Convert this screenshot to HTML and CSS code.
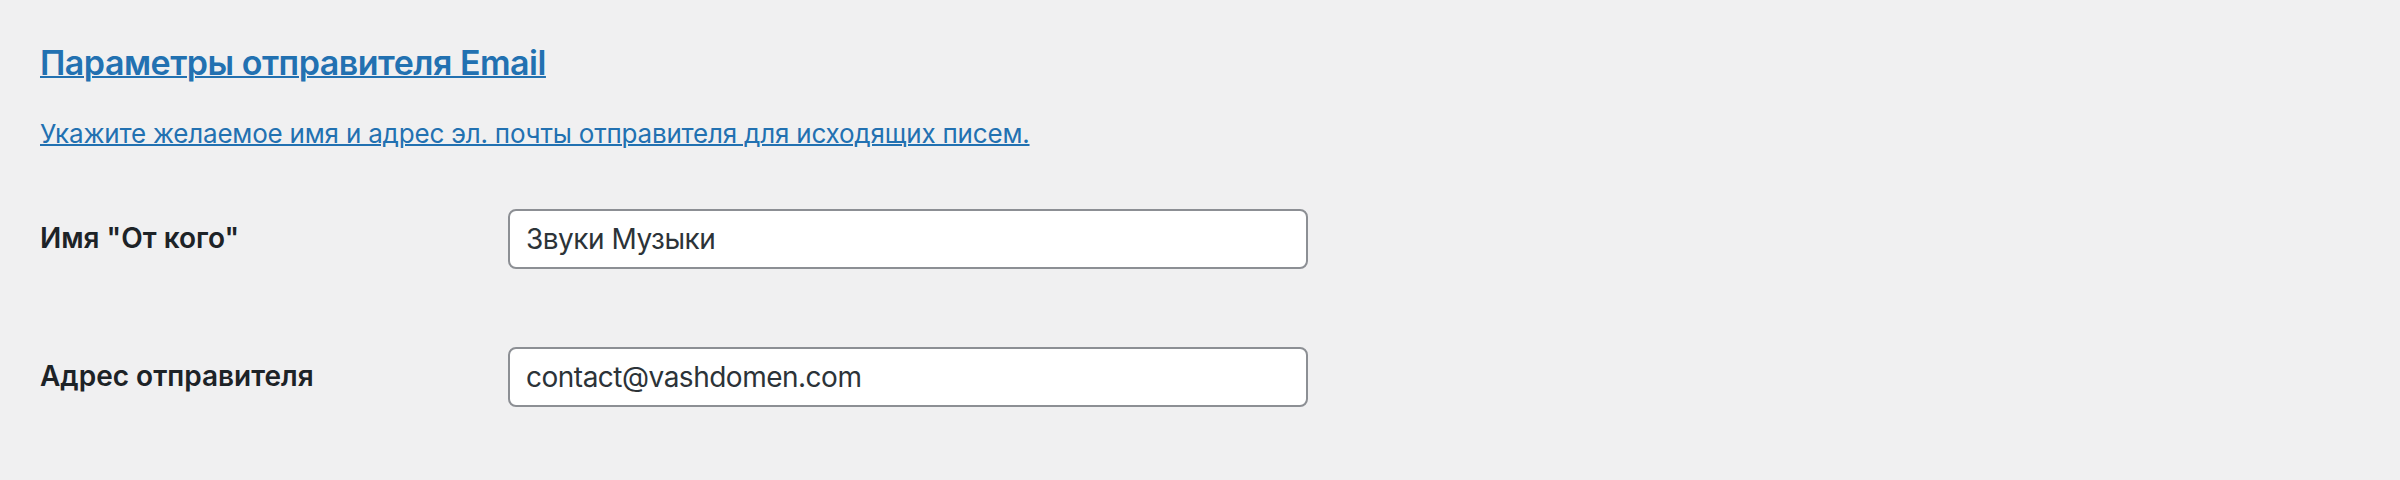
FILE: index.html
```html
<!DOCTYPE html>
<html lang="ru">
<head>
<meta charset="utf-8">
<title>Параметры отправителя Email</title>
<link rel="stylesheet" href="styles.css">
</head>
<body>
<div class="wrap">
  <h2 class="title"><a href="#">Параметры отправителя Email</a></h2>
  <p class="desc"><a href="#">Укажите желаемое имя и адрес эл. почты отправителя для исходящих писем.</a></p>
  <div class="form">
    <label class="label" for="from-name">Имя "От кого"</label>
    <input class="field" id="from-name" type="text" value="Звуки Музыки">
    <label class="label" for="from-email">Адрес отправителя</label>
    <input class="field" id="from-email" type="text" value="contact@vashdomen.com">
  </div>
</div>
</body>
</html>
```

FILE: styles.css
```css
html, body {
  margin: 0;
  padding: 0;
  background: #f0f0f1;
}

body {
  font-family: Inter, "Noto Sans", sans-serif;
  color: #1d2327;
}

.wrap {
  padding: 41px 40px 0 40px;
}

.title {
  margin: 0;
  font-size: 34px;
  line-height: 44px;
  font-weight: 600;
  letter-spacing: -0.5px;
}

.title a,
.desc a {
  color: #2271b1;
  text-decoration: underline;
  text-decoration-thickness: 2px;
}

.desc {
  margin: 31px 0 0 0;
  font-size: 26px;
  line-height: 36px;
  letter-spacing: -0.2px;
}

.form {
  margin-top: 57px;
  display: grid;
  grid-template-columns: 468px 800px;
  row-gap: 78px;
  align-items: start;
}

.label {
  padding-top: 12px;
  font-size: 28px;
  line-height: 34px;
  font-weight: 600;
  color: #1d2327;
}

.field {
  box-sizing: border-box;
  width: 800px;
  height: 60px;
  margin: 0;
  padding: 0 16px;
  border: 2px solid #8c8f94;
  border-radius: 8px;
  background: #fff;
  font-family: Inter, "Noto Sans", sans-serif;
  font-size: 28px;
  letter-spacing: -0.5px;
  color: #2c3338;
  outline: none;
}
```
